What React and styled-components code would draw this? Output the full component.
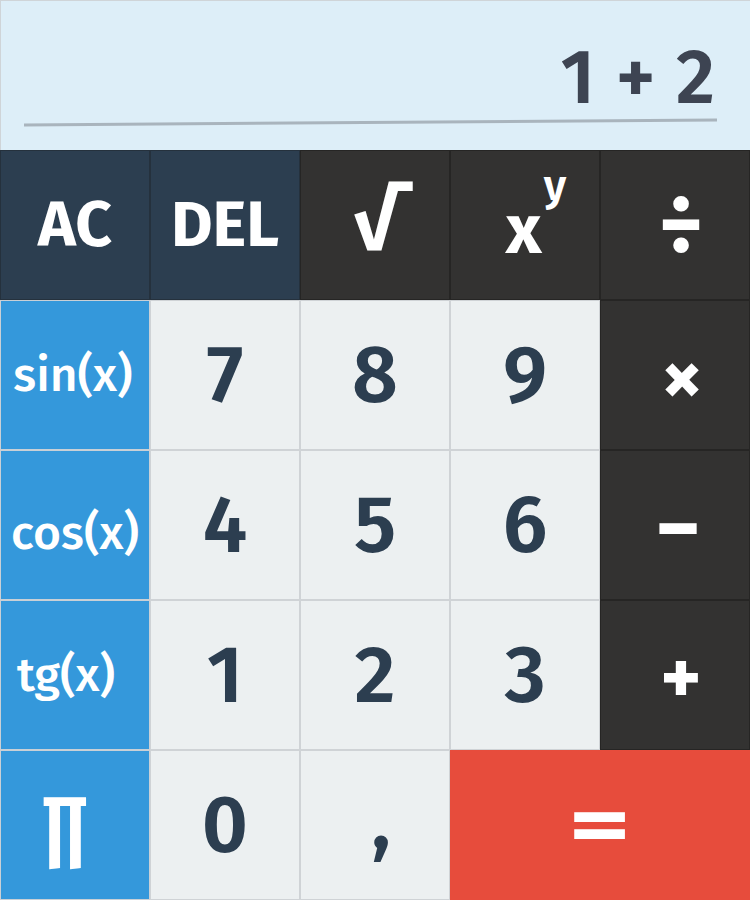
import React from "react";
import styled, { createGlobalStyle } from "styled-components";

const Global = createGlobalStyle`
  html, body { margin: 0; padding: 0; background: #ffffff; }
  body { font-family: "Fira Sans", "Open Sans", "Noto Sans", sans-serif; }
  * { box-sizing: border-box; }
`;

const Calculator = styled.div`
  width: 750px;
  display: flex;
  flex-direction: column;
`;

const Display = styled.div`
  height: 150px;
  background: #ddeef8;
  border-top: 1px solid #cfd4d8;
  border-left: 1px solid #cfd4d8;
  display: flex;
  flex-direction: column;
  justify-content: flex-end;
  padding: 0 33px 26px 23px;
`;

const Expression = styled.div`
  text-align: right;
  font-size: 76px;
  font-weight: 600;
  line-height: 1;
  color: #3d4452;
  letter-spacing: 1px;
  margin-bottom: 5px;
  margin-right: 1px;
`;

const Underline = styled.div`
  height: 3px;
  background: #a9b4bd;
  transform: rotate(-0.41deg);
`;

const Pad = styled.div`
  display: grid;
  grid-template-columns: repeat(5, 150px);
  grid-auto-rows: 150px;
`;

const palettes = {
  navy: { bg: "#2c3e50", fg: "#ffffff", border: "#25313d" },
  dark: { bg: "#333231", fg: "#ffffff", border: "#262524" },
  blue: { bg: "#3498db", fg: "#ffffff", border: "#c9d0d6" },
  light: { bg: "#ecf0f1", fg: "#2c3e50", border: "#cfd3d6" },
  red: { bg: "#e74c3c", fg: "#ffffff", border: "#e74c3c" },
};

const Key = styled.div`
  grid-column: span ${(p) => p.$span || 1};
  background: ${(p) => palettes[p.$kind].bg};
  color: ${(p) => palettes[p.$kind].fg};
  border: 1px solid ${(p) => palettes[p.$kind].border};
  display: flex;
  align-items: center;
  justify-content: center;
  font-size: ${(p) => p.$size || 80}px;
  font-weight: ${(p) => p.$weight || 600};
  line-height: 1;
  padding-left: ${(p) => Math.max(0, 2 * (p.$dx || 0))}px;
  padding-right: ${(p) => Math.max(0, -2 * (p.$dx || 0))}px;
  padding-top: ${(p) => Math.max(0, 2 * (p.$dy || 0))}px;
  padding-bottom: ${(p) => Math.max(0, -2 * (p.$dy || 0))}px;
  user-select: none;
`;

const Sup = styled.span`
  font-size: 44px;
  font-weight: 600;
  position: relative;
  top: -44px;
  margin-left: 2px;
`;

const Glyph = styled.span`
  display: inline-block;
  transform: scaleX(${(p) => p.$sx || 1});
`;

export default function App() {
  return (
    <>
      <Global />
      <Calculator>
        <Display>
          <Expression>1 + 2</Expression>
          <Underline />
        </Display>
        <Pad>
          <Key $kind="navy" $size={64} $weight={700}>AC</Key>
          <Key $kind="navy" $size={64} $weight={700}>DEL</Key>
          <Key $kind="dark" $size={78} $weight={700}>√</Key>
          <Key $kind="dark" $size={70} $weight={700} $dx={11} $dy={5}>
            x<Sup>y</Sup>
          </Key>
          <Key $kind="dark" $size={86} $weight={700} $dx={6}>÷</Key>

          <Key $kind="blue" $size={48} $weight={500} $dx={-2}>sin(x)</Key>
          <Key $kind="light">7</Key>
          <Key $kind="light">8</Key>
          <Key $kind="light">9</Key>
          <Key $kind="dark" $size={82} $weight={700} $dx={7} $dy={3}>×</Key>

          <Key $kind="blue" $size={48} $weight={500} $dy={8}>cos(x)</Key>
          <Key $kind="light">4</Key>
          <Key $kind="light">5</Key>
          <Key $kind="light">6</Key>
          <Key $kind="dark" $size={88} $weight={700} $dx={3} $dy={4}>−</Key>

          <Key $kind="blue" $size={48} $weight={500} $dx={-9}>tg(x)</Key>
          <Key $kind="light">1</Key>
          <Key $kind="light">2</Key>
          <Key $kind="light">3</Key>
          <Key $kind="dark" $size={78} $weight={700} $dx={6} $dy={3}>+</Key>

          <Key $kind="blue" $size={80} $weight={600} $dx={-10}>∏</Key>
          <Key $kind="light">0</Key>
          <Key $kind="light" $dx={6} $dy={-4}>,</Key>
          <Key $kind="red" $span={2} $size={80} $weight={700}><Glyph $sx={1.5}>=</Glyph></Key>
        </Pad>
      </Calculator>
    </>
  );
}
